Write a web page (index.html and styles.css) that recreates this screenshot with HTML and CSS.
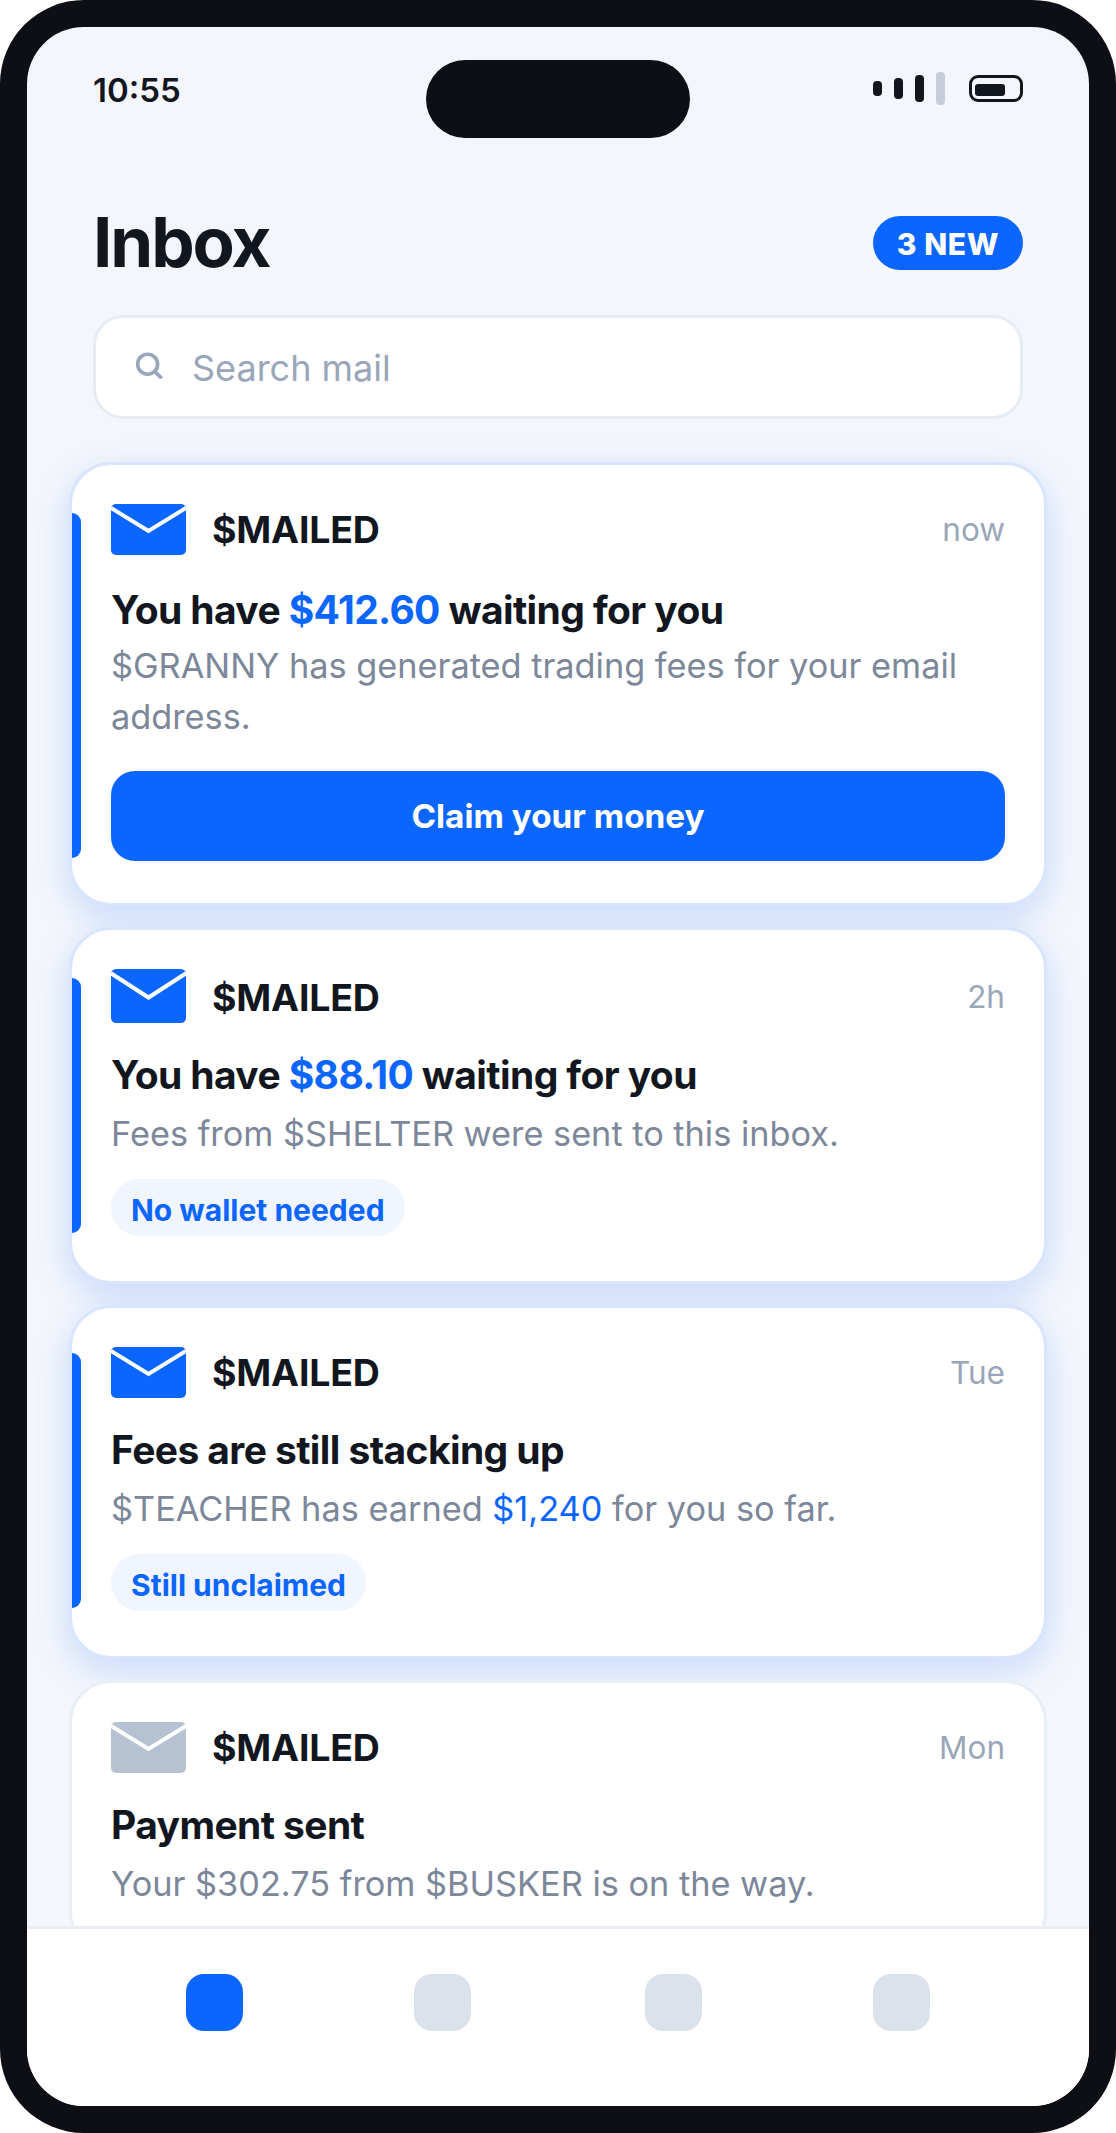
FILE: index.html
```html
<!DOCTYPE html>
<html lang="en">
<head>
<meta charset="utf-8">
<title>Inbox</title>
<link rel="stylesheet" href="styles.css">
</head>
<body>
<div class="phone">
  <div class="screen">
    <main class="content">
      <div class="status">
        <span class="time">10:55</span>
        <span class="island"></span>
        <div class="status-icons">
          <div class="signal">
            <span class="bar bar1"></span>
            <span class="bar bar2"></span>
            <span class="bar bar3"></span>
            <span class="bar bar4"></span>
          </div>
          <div class="battery"><span class="battery-fill"></span></div>
        </div>
      </div>
      <header class="head">
        <h1 class="title">Inbox</h1>
        <span class="badge">3 NEW</span>
      </header>
      <div class="search">
        <svg class="search-icon" width="27" height="27" viewBox="0 0 27 27" fill="none" stroke="#9aa6b9" stroke-width="3.6"><circle cx="11.6" cy="12.2" r="10"/><path d="M18.8 19.6l7 6.8"/></svg>
        <span class="search-text">Search mail</span>
      </div>
      <div class="list">
        <article class="card unread card-first">
          <span class="accent accent-short-bottom"></span>
          <div class="row">
            <svg class="env" viewBox="0 0 75 51" preserveAspectRatio="none"><rect width="75" height="51" rx="5" fill="#0b66ff"/><path d="M0 4l37.5 23L75 4" fill="none" stroke="#fff" stroke-width="4"/></svg>
            <span class="sender">$MAILED</span>
            <span class="when">now</span>
          </div>
          <h2 class="subject">You have <span class="blue">$412.60</span> waiting for you</h2>
          <p class="body">$GRANNY has generated trading fees for your email address.</p>
          <button class="cta">Claim your money</button>
        </article>
        <article class="card unread">
          <span class="accent"></span>
          <div class="row row-tall">
            <svg class="env" viewBox="0 0 75 51" preserveAspectRatio="none"><rect width="75" height="51" rx="5" fill="#0b66ff"/><path d="M0 4l37.5 23L75 4" fill="none" stroke="#fff" stroke-width="4"/></svg>
            <span class="sender">$MAILED</span>
            <span class="when">2h</span>
          </div>
          <h2 class="subject">You have <span class="blue">$88.10</span> waiting for you</h2>
          <p class="body">Fees from $SHELTER were sent to this inbox.</p>
          <span class="pill">No wallet needed</span>
        </article>
        <article class="card unread">
          <span class="accent accent-short-top"></span>
          <div class="row">
            <svg class="env" viewBox="0 0 75 51" preserveAspectRatio="none"><rect width="75" height="51" rx="5" fill="#0b66ff"/><path d="M0 4l37.5 23L75 4" fill="none" stroke="#fff" stroke-width="4"/></svg>
            <span class="sender">$MAILED</span>
            <span class="when">Tue</span>
          </div>
          <h2 class="subject">Fees are still stacking up</h2>
          <p class="body">$TEACHER has earned <span class="blue">$1,240</span> for you so far.</p>
          <span class="pill">Still unclaimed</span>
        </article>
        <article class="card">
          <div class="row">
            <svg class="env" viewBox="0 0 75 51" preserveAspectRatio="none"><rect width="75" height="51" rx="5" fill="#b6c1d1"/><path d="M0 4l37.5 23L75 4" fill="none" stroke="#fff" stroke-width="4"/></svg>
            <span class="sender">$MAILED</span>
            <span class="when">Mon</span>
          </div>
          <h2 class="subject">Payment sent</h2>
          <p class="body">Your $302.75 from $BUSKER is on the way.</p>
        </article>
      </div>
    </main>
    <nav class="nav">
      <span class="tab active"></span>
      <span class="tab"></span>
      <span class="tab tab-mid"></span>
      <span class="tab"></span>
    </nav>
  </div>
</div>
</body>
</html>
```
FILE: styles.css
```css
* { box-sizing: border-box; }
html, body { margin: 0; padding: 0; background: #fff; }
body { font-family: Inter, "Liberation Sans", sans-serif; }

.phone {
  width: 1116px;
  height: 2133px;
  padding: 27px;
  background: #0d0f14;
  border-radius: 84px;
}
.screen {
  height: 100%;
  display: flex;
  flex-direction: column;
  overflow: hidden;
  background: #f4f6fb;
  border-radius: 57px;
}
.content {
  flex: 1;
  min-height: 0;
  overflow: hidden;
}

.status {
  height: 78px;
  margin-top: 33px;
  padding: 0 66px;
  display: grid;
  grid-template-columns: 1fr 264px 1fr;
  align-items: start;
}
.time {
  font-size: 33px;
  line-height: 40px;
  font-weight: 600;
  color: #12171f;
  margin-top: 10px;
}
.island {
  height: 78px;
  border-radius: 39px;
  background: #0d0f14;
}
.status-icons {
  display: flex;
  justify-content: flex-end;
  align-items: center;
  gap: 24px;
  margin-top: 12px;
}
.signal { display: flex; align-items: center; gap: 12px; }
.bar { display: block; width: 9px; border-radius: 4px; background: #12171f; }
.bar1 { height: 15px; }
.bar2 { height: 21px; }
.bar3 { height: 27px; }
.bar4 { height: 33px; background: #c7cdd9; }
.battery {
  width: 54px;
  height: 27px;
  padding: 3px;
  border: 3px solid #12171f;
  border-radius: 9px;
  display: flex;
  align-items: flex-end;
}
.battery-fill { display: block; width: 30px; height: 12px; border-radius: 3px; background: #12171f; }

.head {
  margin-top: 69px;
  padding: 0 66px;
  display: flex;
  justify-content: space-between;
  align-items: center;
}
.title {
  margin: 1px 0 2px;
  font-size: 69px;
  line-height: 69px;
  font-weight: 700;
  letter-spacing: -0.03em;
  color: #12171f;
}
.badge {
  height: 54px;
  padding: 0 24px;
  border-radius: 27px;
  background: #0b66ff;
  color: #fff;
  font-size: 30px;
  line-height: 56px;
  font-weight: 800;
  letter-spacing: 0.02em;
}

.search {
  height: 104px;
  margin: 36px 66px 0;
  padding: 0 40px;
  display: flex;
  align-items: center;
  gap: 29px;
  background: #fff;
  border: 3px solid #e7ecf4;
  border-radius: 30px;
}
.search-icon { flex: none; margin-top: -3px; }
.search-text { font-size: 36px; color: #9aa6b9; margin-top: 2px; }

.list {
  margin-top: 43px;
  padding: 0 42px;
  display: flex;
  flex-direction: column;
  gap: 21px;
}
.card {
  position: relative;
  padding: 39px 39px 42px;
  background: #fff;
  border: 3px solid #e9eef6;
  border-radius: 42px;
}
.card.unread {
  border-color: #d9e5ff;
  box-shadow: 0 12px 36px rgba(11, 102, 255, 0.19);
}
.accent {
  position: absolute;
  left: 0;
  top: 48px;
  bottom: 48px;
  width: 9px;
  border-radius: 0 9px 9px 0;
  background: #0b66ff;
}
.accent-short-bottom { bottom: 45px; }
.accent-short-top { top: 45px; }
.row {
  display: flex;
  align-items: center;
  gap: 26px;
  height: 51px;
}
.row-tall { height: 54px; }
.row-tall .sender { margin-top: 2px; }
.env { width: 75px; height: 100%; flex: none; }
.sender {
  font-size: 37.5px;
  font-weight: 700;
  letter-spacing: -0.005em;
  color: #12171f;
}
.when {
  margin-left: auto;
  font-size: 31.5px;
  color: #9aa6b9;
}
.subject {
  margin: 26px 0 0;
  font-size: 39px;
  line-height: 52px;
  font-weight: 700;
  letter-spacing: -0.6px;
  color: #12171f;
}
.card-first .subject { margin-top: 29px; }
.blue { color: #0b66ff; }
.body {
  margin: 7px 0 0;
  font-size: 34.3px;
  line-height: 51px;
  color: #7c879a;
}
.card-first .body { margin-top: 4px; }
.cta {
  display: block;
  width: 100%;
  height: 90px;
  margin-top: 29px;
  border: 0;
  border-radius: 24px;
  background: #0b66ff;
  color: #fff;
  font-family: inherit;
  font-size: 33.3px;
  font-weight: 700;
}
.pill {
  display: block;
  width: fit-content;
  height: 57px;
  margin: 20px 0 3px;
  padding: 0 20px;
  border-radius: 29px;
  background: #f1f5ff;
  color: #0b66ff;
  font-size: 30px;
  line-height: 62px;
  font-weight: 700;
}

.nav {
  flex: none;
  height: 180px;
  padding: 45px 159px 0;
  display: flex;
  gap: 171px;
  align-items: flex-start;
  background: #fff;
  border-top: 3px solid #e9eef6;
}
.tab {
  width: 57px;
  height: 57px;
  border-radius: 18px;
  background: #dce2ec;
}
.tab-mid { margin-left: 3px; }
.tab.active { background: #0b66ff; }
```
